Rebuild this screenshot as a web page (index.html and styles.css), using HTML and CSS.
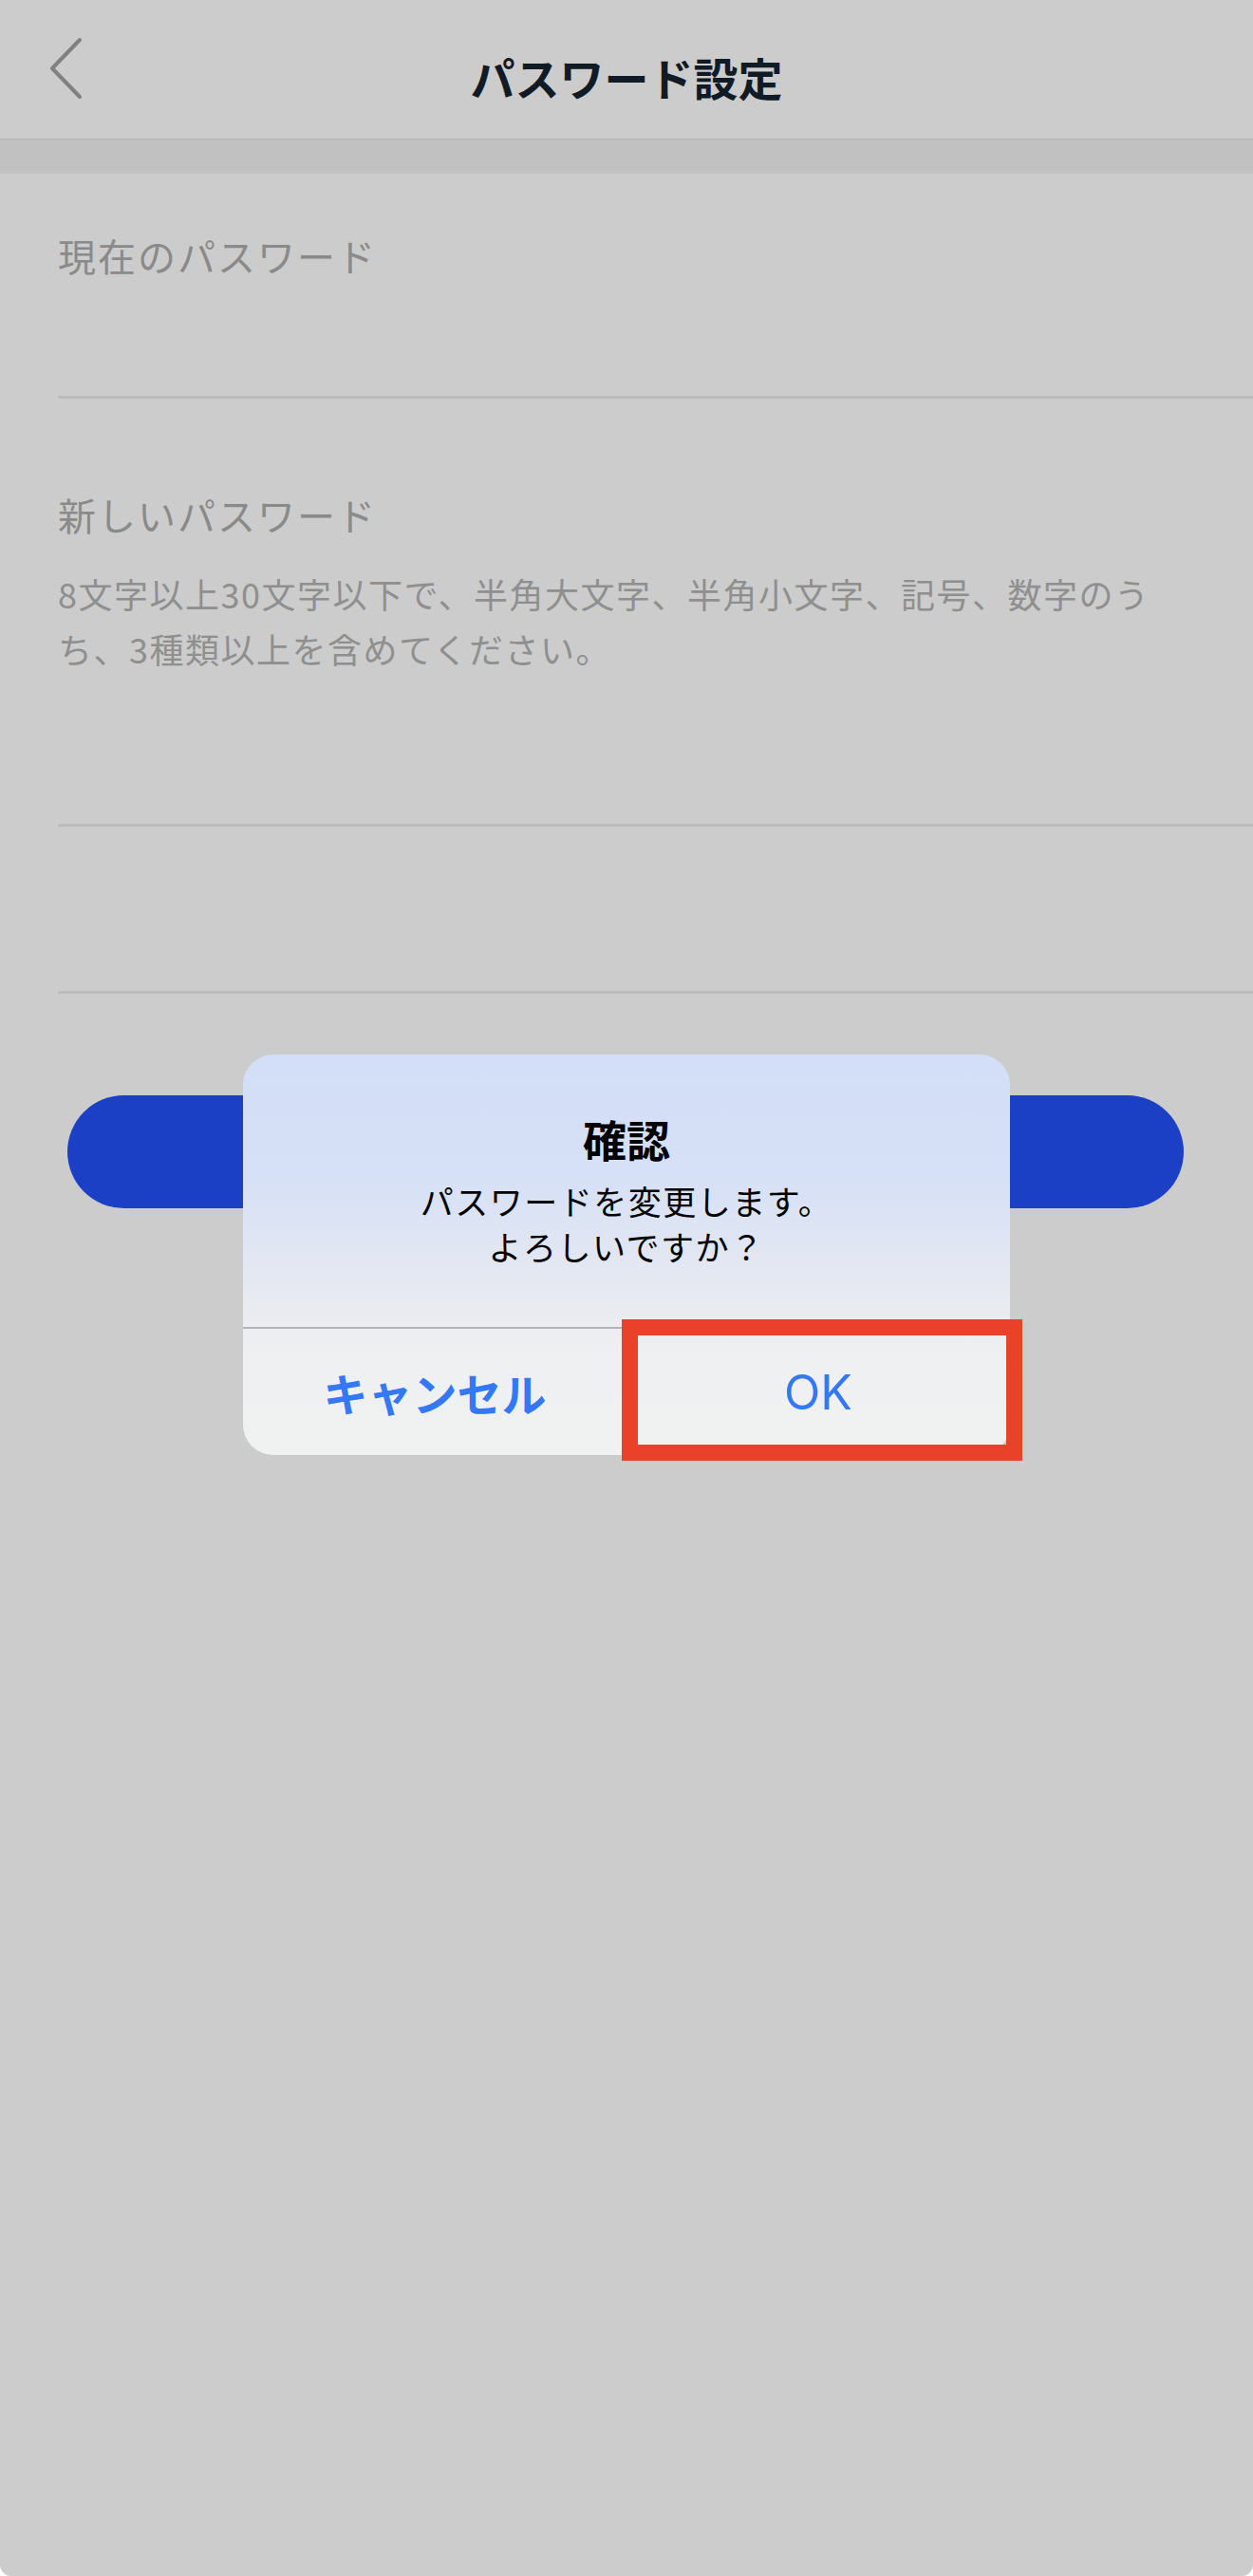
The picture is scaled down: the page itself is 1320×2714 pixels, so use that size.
FILE: index.html
```html
<!DOCTYPE html>
<html lang="ja">
<head>
<meta charset="utf-8">
<title>パスワード設定</title>
<link rel="stylesheet" href="styles.css">
</head>
<body>
<div class="screen">
  <header class="header">
    <div class="back">
      <svg width="40" height="66" viewBox="0 0 40 66" aria-hidden="true">
        <polyline points="34,3 5,33 34,63" fill="none" stroke="#808080" stroke-width="4" stroke-linecap="round" stroke-linejoin="round"/>
      </svg>
    </div>
    <h1 class="title">パスワード設定</h1>
    <div class="spacer"></div>
  </header>
  <div class="band"></div>

  <main class="form">
    <div class="field field-current">
      <div class="label">現在のパスワード</div>
    </div>
    <div class="field field-new">
      <div class="label">新しいパスワード</div>
      <p class="help">8文字以上30文字以下で、半角大文字、半角小文字、記号、数字のうち、3種類以上を含めてください。</p>
    </div>
    <div class="field field-confirm"></div>
    <div class="submit-wrap">
      <div class="submit"></div>
    </div>
  </main>

  <div class="dialog">
    <div class="dialog-body">
      <div class="dialog-title">確認</div>
      <div class="dialog-msg">パスワードを変更します。<br>よろしいですか？</div>
    </div>
    <div class="dialog-actions">
      <div class="action action-cancel">キャンセル</div>
      <div class="action action-ok">OK</div>
    </div>
  </div>
  <div class="highlight"></div>
</div>
</body>
</html>
```

FILE: styles.css
```css
* { box-sizing: border-box; }

html, body {
  margin: 0;
  padding: 0;
  background: #ffffff;
}

body {
  font-family: "Noto Sans CJK JP", "Noto Sans", sans-serif;
}

.screen {
  position: relative;
  width: 1320px;
  height: 2714px;
  background: #cccccc;
  border-radius: 0 0 12px 12px;
  overflow: hidden;
}

.header {
  height: 147px;
  display: grid;
  grid-template-columns: 1fr auto 1fr;
  align-items: center;
  border-bottom: 1px solid #b6b6b6;
}

.back {
  padding-left: 50px;
  display: flex;
  align-items: center;
  padding-bottom: 2px;
}

.back svg { display: block; }

.title {
  margin: 0;
  font-size: 47px;
  font-weight: 700;
  color: #111b25;
  line-height: 1;
  padding-top: 14px;
}

.band {
  height: 36px;
  background: #c1c1c1;
}

.form {
  display: flex;
  flex-direction: column;
}

.field {
  margin-left: 61px;
  border-bottom: 3px solid #bcbcbc;
}

.field-current {
  height: 237px;
  padding-top: 61px;
}

.field-new {
  height: 451px;
  padding-top: 97px;
}

.field-confirm {
  height: 176px;
}

.label {
  font-size: 40px;
  line-height: 50px;
  letter-spacing: 2px;
  color: #8a8a8a;
}

.help {
  margin: 29px 0 0;
  padding-right: 100px;
  font-size: 36px;
  line-height: 58px;
  letter-spacing: 1.5px;
  color: #8f8f8f;
}

.submit-wrap {
  padding: 107px 73px 0 71px;
}

.submit {
  height: 119px;
  border-radius: 60px;
  background: #1b40c6;
}

.dialog {
  position: absolute;
  left: 256px;
  top: 1111px;
  width: 808px;
  height: 422px;
  border-radius: 32px;
  overflow: hidden;
  background: linear-gradient(180deg, #d3dff8 0%, #d6e0f6 30%, #e6e9f1 58%, #eff0f1 75%, #f0f1f1 100%);
  display: flex;
  flex-direction: column;
}

.dialog-body {
  height: 289px;
  padding-top: 60px;
  text-align: center;
  border-bottom: 2px solid #b4b4b6;
}

.dialog-title {
  font-size: 46px;
  font-weight: 700;
  line-height: 56px;
  color: #000000;
}

.dialog-msg {
  margin-top: 14px;
  font-size: 35px;
  line-height: 48px;
  letter-spacing: 1.5px;
  color: #000000;
}

.dialog-actions {
  flex: 1;
  display: grid;
  grid-template-columns: 1fr 1fr;
}

.action {
  display: flex;
  align-items: center;
  justify-content: center;
  color: #3478f6;
}

.action-cancel {
  font-size: 47px;
  font-weight: 700;
}

.action-ok {
  font-size: 50px;
  font-weight: 400;
  font-family: "Inter", "Noto Sans", sans-serif;
}

.highlight {
  position: absolute;
  left: 655px;
  top: 1390px;
  width: 422px;
  height: 149px;
  border: 17px solid #e9412a;
}
```
